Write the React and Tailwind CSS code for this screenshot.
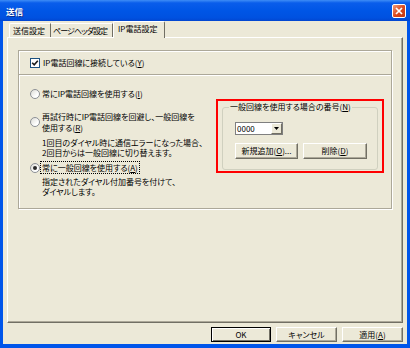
import React from 'react';

// Windows XP "送信" dialog, IP電話設定 tab

function Mn({ children }) {
  return <span className="underline underline-offset-[1px]">{children}</span>;
}

function CheckBox() {
  return (
    <span className="w-[10px] h-[10px] shrink-0 border border-[#1C5180] bg-white flex items-center justify-center">
      <svg width="8" height="8" viewBox="0 0 8 8">
        <path d="M1.2 3.8 L3.2 5.8 L6.8 1.8" fill="none" stroke="#1a1a1a" strokeWidth="1.6" />
      </svg>
    </span>
  );
}

function Radio({ on }) {
  return (
    <span className="w-[10px] h-[10px] shrink-0 rounded-full border border-[#8C9096] bg-[linear-gradient(135deg,#dcdcd6,#ffffff_70%)] flex items-center justify-center">
      {on && <span className="w-[4px] h-[4px] rounded-full bg-[#2a2a2a]" />}
    </span>
  );
}

function Btn({ children, def, className = '' }) {
  return (
    <div
      className={
        'h-[15px] flex items-center justify-center whitespace-nowrap bg-[#ECE9D8] border ' +
        (def
          ? 'border-black shadow-[inset_1px_1px_0_#fff,inset_-1px_-1px_0_#716F64] '
          : 'border-t-white border-l-white border-r-[#716F64] border-b-[#716F64] shadow-[inset_-1px_-1px_0_#ACA899] ') +
        className
      }
    >
      {children}
    </div>
  );
}

export default function App() {
  return (
    <div className="w-[410px] h-[348px] flex flex-col bg-[#ECE9D8] font-['Noto_Sans_CJK_JP',sans-serif] text-[8px] leading-[10px] text-black [font-feature-settings:'palt']">
      {/* Title bar */}
      <div className="h-[21px] shrink-0 flex items-center justify-between pl-[6px] pr-[4px] bg-[linear-gradient(to_bottom,#3E8DF6_0%,#0A5DEB_14%,#0056E6_50%,#0051E0_85%,#0246D0_100%)]">
        <span className="text-white font-bold text-[8.5px] [text-shadow:1px_1px_0_#0B2C8C]">送信</span>
        <div className="w-[14px] h-[14px] rounded-[2px] border border-white bg-[linear-gradient(135deg,#F29A78,#D8461C_55%,#C23812)] flex items-center justify-center">
          <svg width="8" height="8" viewBox="0 0 8 8">
            <path d="M1 1 L7 7 M7 1 L1 7" stroke="#fff" strokeWidth="1.7" />
          </svg>
        </div>
      </div>

      {/* Body */}
      <div className="flex-1 flex flex-col border-x-[3px] border-b-[4px] border-[#0055EA] px-[4px]">
        {/* Tabs */}
        <div className="h-[16px] flex items-end pl-[2px] whitespace-nowrap">
          <div className="h-[14px] w-[42px] pl-[3px] flex items-center border-t border-l border-white border-r border-r-[#716F64] rounded-tl-[2px]">
            送信設定
          </div>
          <div className="h-[14px] w-[62px] pl-[2px] flex items-center border-t border-white border-r border-r-[#716F64] tracking-[-0.9px]">
            ページヘッダ設定
          </div>
          <div className="relative z-10 -mb-[1px] h-[17px] w-[52px] pl-[4px] pb-[2px] flex items-center bg-[#ECE9D8] border-t border-l border-white border-r border-r-[#716F64] rounded-t-[2px]">
            IP電話設定
          </div>
        </div>

        {/* Tab panel */}
        <div className="h-[286px] border border-t-white border-l-white border-r-[#716F64] border-b-[#716F64] shadow-[inset_-1px_-1px_0_#ACA899]">
          <div className="mt-[12px] ml-[10px] w-[374px] h-[159px] flex flex-col border border-[#ACA899] shadow-[inset_1px_1px_0_#fff,1px_1px_0_#fff]">
            {/* connect checkbox */}
            <div className="h-[24px] shrink-0 flex items-center gap-[3px] pl-[11px] border-b border-[#ACA899] shadow-[0_1px_0_#fff]">
              <CheckBox />
              <span className="whitespace-nowrap">IP電話回線に接続している(<Mn>Y</Mn>)</span>
            </div>

            <div className="flex items-start mt-[1px]">
              {/* radios */}
              <div className="w-[197px] shrink-0 pl-[11px] pt-[12px] whitespace-nowrap">
                <div className="flex items-center gap-[2px] leading-[11px]">
                  <Radio />
                  <span>常にIP電話回線を使用する(<Mn>I</Mn>)</span>
                </div>
                <div className="mt-[12px] flex items-center gap-[2px] leading-[11px]">
                  <Radio />
                  <span>
                    再試行時にIP電話回線を回避し、一般回線を
                    <br />
                    使用する(<Mn>R</Mn>)
                  </span>
                </div>
                <div className="mt-[5px] pl-[12px]">
                  1回目のダイヤル時に通信エラーになった場合、
                  <br />
                  2回目からは一般回線に切り替えます。
                </div>
                <div className="mt-[4px] flex items-center gap-[1px] leading-[11px]">
                  <Radio on />
                  <span className="outline outline-1 outline-dotted outline-black px-[1px]">
                    常に一般回線を使用する(<Mn>A</Mn>)
                  </span>
                </div>
                <div className="mt-[4px] pl-[12px]">
                  指定されたダイヤル付加番号を付けて、
                  <br />
                  ダイヤルします。
                </div>
              </div>

              {/* highlighted number group */}
              <div className="mt-[23px] w-[168px] h-[74px] shrink-0 border-2 border-[#FF0000] px-[4px] pt-[1px]">
                <fieldset className="w-[156px] h-[68px] border border-[#D0D0BF] rounded-[3px] pl-[12px] pt-[10px]">
                  <legend className="-ml-[6px] px-[1px] leading-[10px] whitespace-nowrap">
                    一般回線を使用する場合の番号(<Mn>N</Mn>)
                  </legend>
                  <div className="w-[48px] h-[13px] flex items-stretch bg-white border border-[#7F7F7F]">
                    <span className="flex-1 pl-[1px] flex items-center leading-none">0000</span>
                    <span className="w-[11px] flex items-center justify-center bg-[#ECE9D8] border border-t-white border-l-white border-r-[#716F64] border-b-[#716F64]">
                      <svg width="5" height="3" viewBox="0 0 5 3">
                        <path d="M0 0 H5 L2.5 3 Z" fill="#000" />
                      </svg>
                    </span>
                  </div>
                  <div className="mt-[8px] flex gap-[5px]">
                    <Btn className="w-[63px] h-[16px]">新規追加(<Mn>O</Mn>)...</Btn>
                    <Btn className="w-[64px] h-[16px]">削除(<Mn>D</Mn>)</Btn>
                  </div>
                </fieldset>
              </div>
            </div>
          </div>
        </div>

        {/* Dialog buttons */}
        <div className="mt-[4px] flex justify-end gap-[5px]">
          <Btn def className="w-[60px]">OK</Btn>
          <Btn className="w-[61px]">キャンセル</Btn>
          <Btn className="w-[61px]">適用(<Mn>A</Mn>)</Btn>
        </div>
      </div>
    </div>
  );
}
